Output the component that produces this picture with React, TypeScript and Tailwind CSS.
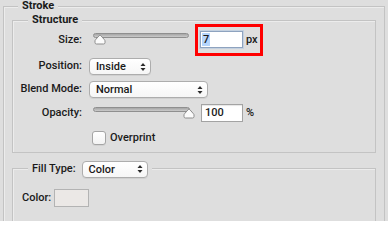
import React from "react";

const font = { fontFamily: 'Roboto, "Liberation Sans", Arial, sans-serif' };

function Chevron() {
  return (
    <svg width="6" height="10" viewBox="0 0 6 10" className="shrink-0">
      <path d="M0.5 4 L3 1 L5.5 4 Z" fill="#2a2a2a" />
      <path d="M0.5 6 L3 9 L5.5 6 Z" fill="#2a2a2a" />
    </svg>
  );
}

function Select({ label, w }: { label: string; w: string }) {
  return (
    <div
      className={`${w} h-[17px] flex items-center justify-between pl-[6px] pr-[4px] rounded-[4px] border border-[#adadad] bg-gradient-to-b from-[#ffffff] to-[#f6f6f6] shadow-[0_1px_0_rgba(0,0,0,0.06)] text-[11px] leading-none text-[#1a1a1a]`}
    >
      <span>{label}</span>
      <Chevron />
    </div>
  );
}

function Thumb() {
  return (
    <svg width="12" height="12" viewBox="0 0 12 12">
      <path
        d="M1 9.5 Q1 11 2.5 11 H9.5 Q11 11 11 9.5 V8 Q11 7.3 10.4 6.7 L6.8 2.6 Q6 1.8 5.2 2.6 L1.6 6.7 Q1 7.3 1 8 Z"
        fill="#fbfbfb"
        stroke="#8d8d8d"
        strokeWidth="1"
      />
    </svg>
  );
}

function Slider({ w, thumbLeft }: { w: string; thumbLeft: string }) {
  return (
    <div className={`relative ${w} h-[12px] self-start`}>
      <div className="h-[5px] w-full rounded-full border border-[#8f8f8f] bg-gradient-to-b from-[#a6a6a6] to-[#cbcbcb]" />
      <div className={`absolute top-0 ${thumbLeft}`}>
        <Thumb />
      </div>
    </div>
  );
}

function Box({ children, className = "" }: { children: React.ReactNode; className?: string }) {
  return (
    <div
      className={`border border-[#c3c3c3] shadow-[inset_1px_1px_0_#ececec] ${className}`}
    >
      {children}
    </div>
  );
}

export default function App() {
  return (
    <div
      className="w-[388px] h-[221px] overflow-hidden bg-[#dedede] px-[3px] pt-[6px] text-[#1a1a1a] font-medium"
      style={font}
    >
      <Box className="h-[260px]">
        <div className="-mt-[7px] ml-[14px] w-fit px-[4px] bg-[#dedede] text-[11px] leading-[12px] font-bold">
          Stroke
        </div>

        {/* Structure */}
        <Box className="mt-[8px] ml-[8px] w-[364px] pb-[7px]">
          <div className="-mt-[7px] ml-[15px] w-fit px-[4px] bg-[#dedede] text-[11px] leading-[12px] font-bold">
            Structure
          </div>

          {/* Size row */}
          <div className="-mt-[2px] h-[32px] flex items-center text-[11px]">
            <div className="w-[69px] text-right">Size:</div>
            <div className="ml-[11px] mt-[9px] self-start">
              <Slider w="w-[96px]" thumbLeft="left-[1px]" />
            </div>
            <div className="ml-[6px] w-[68px] h-[32px] border-[3px] border-[#ff0000] flex items-center pl-[2px]">
              <div className="w-[43px] h-[17px] -mt-[1px] border border-[#8ea3bf] bg-white shadow-[0_0_0_1px_rgba(150,185,230,0.35)] flex items-center pl-[1px]">
                <span className="bg-[#b5d5fc] px-[1px] leading-[13px]">7</span>
              </div>
              <span className="ml-[3px]">px</span>
            </div>
          </div>

          {/* Position row */}
          <div className="mt-[2px] h-[17px] flex items-center text-[11px]">
            <div className="w-[69px] text-right">Position:</div>
            <div className="ml-[7px]">
              <Select label="Inside" w="w-[62px]" />
            </div>
          </div>

          {/* Blend row */}
          <div className="mt-[6px] h-[17px] flex items-center text-[11px]">
            <div className="w-[69px] text-right">Blend Mode:</div>
            <div className="ml-[7px]">
              <Select label="Normal" w="w-[119px]" />
            </div>
          </div>

          {/* Opacity row */}
          <div className="mt-[6px] h-[18px] flex items-center text-[11px]">
            <div className="w-[69px] text-right">Opacity:</div>
            <div className="ml-[11px] mt-[3px] self-start">
              <Slider w="w-[97px]" thumbLeft="left-[90px]" />
            </div>
            <div className="ml-[11px] w-[42px] h-[18px] border border-[#a3a3a3] bg-white shadow-[inset_0_1px_1px_rgba(0,0,0,0.1)] flex items-center pl-[3px]">
              100
            </div>
            <span className="ml-[3px]">%</span>
          </div>

          {/* Overprint row */}
          <div className="mt-[9px] h-[14px] flex items-center text-[11px]">
            <div className="ml-[79px] w-[14px] h-[14px] rounded-[3px] border border-[#a5a5a5] bg-gradient-to-b from-[#ffffff] to-[#f3f3f3] shadow-[0_1px_0_rgba(0,0,0,0.05)]" />
            <span className="ml-[4px]">Overprint</span>
          </div>
        </Box>

        {/* Fill Type */}
        <Box className="mt-[15px] ml-[8px] w-[364px] h-[100px]">
          <div className="-mt-[9px] ml-[15px] w-fit px-[4px] bg-[#dedede] flex items-center h-[18px] text-[11px]">
            <span>Fill Type:</span>
            <div className="ml-[6px]">
              <Select label="Color" w="w-[66px]" />
            </div>
          </div>
          <div className="mt-[11px] h-[18px] flex items-center text-[11px]">
            <span className="ml-[9px] w-[32px]">Color:</span>
            <div className="w-[35px] h-[18px] border border-[#b3b3b3] bg-[#ebe8e6]" />
          </div>
        </Box>
      </Box>
    </div>
  );
}
